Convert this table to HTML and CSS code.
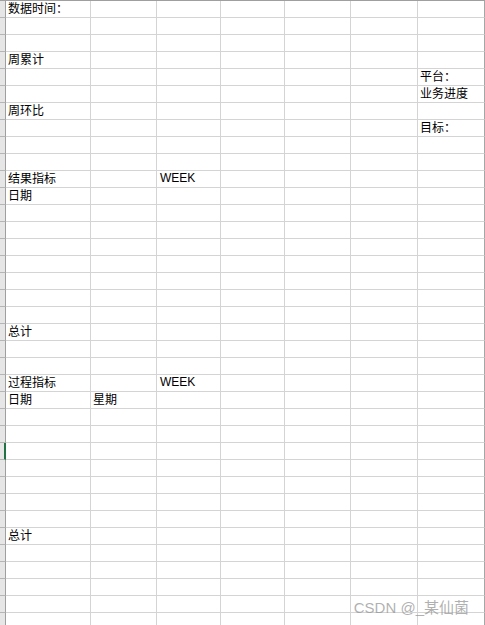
FILE: index.html
```html
<!DOCTYPE html>
<html lang="zh">
<head>
<meta charset="utf-8">
<title>Sheet</title>
<link rel="stylesheet" href="styles.css">
</head>
<body>
<div class="sheet">
<div class="h"></div><div>数据时间：</div><div></div><div></div><div></div><div></div><div></div><div></div>
<div class="h"></div><div></div><div></div><div></div><div></div><div></div><div></div><div></div>
<div class="h"></div><div></div><div></div><div></div><div></div><div></div><div></div><div></div>
<div class="h"></div><div>周累计</div><div></div><div></div><div></div><div></div><div></div><div></div>
<div class="h"></div><div></div><div></div><div></div><div></div><div></div><div></div><div>平台：</div>
<div class="h"></div><div></div><div></div><div></div><div></div><div></div><div></div><div>业务进度</div>
<div class="h"></div><div>周环比</div><div></div><div></div><div></div><div></div><div></div><div></div>
<div class="h"></div><div></div><div></div><div></div><div></div><div></div><div></div><div>目标：</div>
<div class="h"></div><div></div><div></div><div></div><div></div><div></div><div></div><div></div>
<div class="h"></div><div></div><div></div><div></div><div></div><div></div><div></div><div></div>
<div class="h"></div><div>结果指标</div><div></div><div class="lat">WEEK</div><div></div><div></div><div></div><div></div>
<div class="h"></div><div>日期</div><div></div><div></div><div></div><div></div><div></div><div></div>
<div class="h"></div><div></div><div></div><div></div><div></div><div></div><div></div><div></div>
<div class="h"></div><div></div><div></div><div></div><div></div><div></div><div></div><div></div>
<div class="h"></div><div></div><div></div><div></div><div></div><div></div><div></div><div></div>
<div class="h"></div><div></div><div></div><div></div><div></div><div></div><div></div><div></div>
<div class="h"></div><div></div><div></div><div></div><div></div><div></div><div></div><div></div>
<div class="h"></div><div></div><div></div><div></div><div></div><div></div><div></div><div></div>
<div class="h"></div><div></div><div></div><div></div><div></div><div></div><div></div><div></div>
<div class="h"></div><div>总计</div><div></div><div></div><div></div><div></div><div></div><div></div>
<div class="h"></div><div></div><div></div><div></div><div></div><div></div><div></div><div></div>
<div class="h"></div><div></div><div></div><div></div><div></div><div></div><div></div><div></div>
<div class="h"></div><div>过程指标</div><div></div><div class="lat">WEEK</div><div></div><div></div><div></div><div></div>
<div class="h"></div><div>日期</div><div>星期</div><div></div><div></div><div></div><div></div><div></div>
<div class="h"></div><div></div><div></div><div></div><div></div><div></div><div></div><div></div>
<div class="h"></div><div></div><div></div><div></div><div></div><div></div><div></div><div></div>
<div class="h active"></div><div></div><div></div><div></div><div></div><div></div><div></div><div></div>
<div class="h"></div><div></div><div></div><div></div><div></div><div></div><div></div><div></div>
<div class="h"></div><div></div><div></div><div></div><div></div><div></div><div></div><div></div>
<div class="h"></div><div></div><div></div><div></div><div></div><div></div><div></div><div></div>
<div class="h"></div><div></div><div></div><div></div><div></div><div></div><div></div><div></div>
<div class="h"></div><div>总计</div><div></div><div></div><div></div><div></div><div></div><div></div>
<div class="h"></div><div></div><div></div><div></div><div></div><div></div><div></div><div></div>
<div class="h"></div><div></div><div></div><div></div><div></div><div></div><div></div><div></div>
<div class="h"></div><div></div><div></div><div></div><div></div><div></div><div></div><div></div>
<div class="h"></div><div></div><div></div><div></div><div></div><div></div><div></div><div></div>
<div class="h"></div><div></div><div></div><div></div><div></div><div></div><div></div><div></div>
</div>
<div class="watermark">CSDN @_某仙菌</div>
</body>
</html>
```
FILE: styles.css
```css
html, body {
  margin: 0;
  padding: 0;
  background: #ffffff;
  overflow: hidden;
}
body {
  width: 485px;
  height: 625px;
  position: relative;
  font-family: "Noto Sans CJK SC", "Microsoft YaHei", sans-serif;
  font-size: 12px;
  color: #000;
}
.sheet {
  display: grid;
  grid-template-columns: 6px 85px 66px 64px 64px 66px 67px 67px;
  grid-auto-rows: 17px;
  border-top: 1px solid #9f9f9f;
}
.sheet > div {
  box-sizing: border-box;
  border-right: 1px solid #d4d4d4;
  border-bottom: 1px solid #d4d4d4;
  padding-left: 2px;
  line-height: 14px;
  white-space: nowrap;
  overflow: visible;
}
.sheet > div:nth-child(8n) {
  border-right-color: #a6a6a6;
}
.sheet > .h {
  background: #e6e6e6;
  border-right: 1px solid #9f9f9f;
  border-bottom: 1px solid #b5b5b5;
  padding: 0;
}
.sheet > .h.active {
  border-right: 2px solid #217346;
}
.sheet > .lat {
  font-family: "Liberation Sans", "Noto Sans CJK SC", sans-serif;
  padding-left: 3px;
  line-height: 15px;
}
.watermark {
  position: absolute;
  right: 16px;
  bottom: 8px;
  font-family: "Liberation Sans", "Noto Sans CJK SC", sans-serif;
  font-size: 15px;
  color: rgba(150, 150, 150, 0.75);
  line-height: 18px;
}
```
